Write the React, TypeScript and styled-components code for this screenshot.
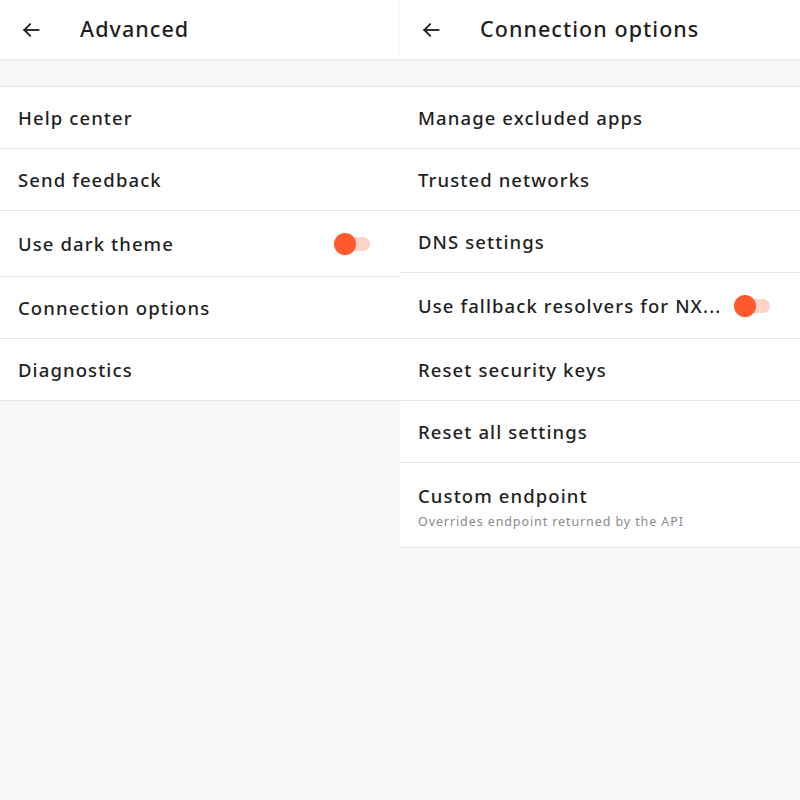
import React from 'react';
import styled, {createGlobalStyle} from "styled-components";

const GlobalStyle = createGlobalStyle`
  html, body {
    margin: 0;
    padding: 0;
    background: #f7f7f7;
  }
  body {
    font-family: "Noto Sans", "Open Sans", sans-serif;
    color: #1f1f1f;
  }
`;

const Page = styled.div`
  display: grid;
  grid-template-columns: 400px 400px;
  width: 800px;
  height: 800px;
  background: #f7f7f7;
`;

const Screen = styled.div`
  display: flex;
  flex-direction: column;
`;

const Header = styled.div`
  height: 59px;
  display: flex;
  align-items: center;
  background: #fff;
  box-shadow: 0 1px 3px rgba(0, 0, 0, 0.08);
  position: relative;
  z-index: 1;
`;

const BackButton = styled.div`
  width: 80px;
  padding-left: 21px;
  box-sizing: border-box;
  display: flex;
  align-items: center;
`;

const Title = styled.div`
  font-size: 21.5px;
  font-weight: 500;
  letter-spacing: 1.05px;
  margin-top: -2px;
`;

const List = styled.div`
  margin-top: 27px;
  background: #fff;
  border-top: 1px solid #e6e6e6;
`;

const Row = styled.div<{ $tall?: boolean }>`
  height: ${p => (p.$tall ? 65 : 61)}px;
  display: flex;
  align-items: center;
  justify-content: space-between;
  padding: 0 30px 0 18px;
  border-bottom: 1px solid #e6e6e6;
`;

const TextBlock = styled.div`
  display: flex;
  flex-direction: column;
`;

const Label = styled.div`
  font-size: 18.5px;
  font-weight: 500;
  letter-spacing: 1.1px;
  white-space: nowrap;
`;

const SubLabel = styled.div`
  font-size: 12.5px;
  color: #8a8a8a;
  margin-top: 5px;
  letter-spacing: 0.9px;
`;

const DetailRow = styled(Row)`
  height: 85px;
  align-items: flex-start;
  padding-top: 20px;
  box-sizing: border-box;
`;

const Track = styled.div`
  position: relative;
  width: 36px;
  height: 14px;
  flex-shrink: 0;
`;

const TrackBar = styled.div`
  position: absolute;
  left: 10px;
  right: 0;
  top: 0;
  bottom: 0;
  border-radius: 7px;
  background: #fdd3c8;
`;

const Thumb = styled.div`
  position: absolute;
  left: 0;
  top: -4px;
  width: 22px;
  height: 22px;
  border-radius: 50%;
  background: #ff5a2c;
  box-shadow: 0 1px 2px rgba(0, 0, 0, 0.1);
`;

const Toggle = () => (
  <Track>
    <TrackBar/>
    <Thumb/>
  </Track>
);

const BackArrow = () => (
  <svg width="20" height="20" viewBox="0 0 24 24" fill="none" stroke="#1f1f1f" strokeWidth="2.2" strokeLinecap="square">
    <path d="M21 12H4"/>
    <path d="M11 5l-7 7 7 7" strokeLinecap="round" strokeLinejoin="miter"/>
  </svg>
);

type Item = { label: string; toggle?: boolean; sub?: string };

const leftItems: Item[] = [
  {label: 'Help center'},
  {label: 'Send feedback'},
  {label: 'Use dark theme', toggle: true},
  {label: 'Connection options'},
  {label: 'Diagnostics'},
];

const rightItems: Item[] = [
  {label: 'Manage excluded apps'},
  {label: 'Trusted networks'},
  {label: 'DNS settings'},
  {label: 'Use fallback resolvers for NX...', toggle: true},
  {label: 'Reset security keys'},
  {label: 'Reset all settings'},
  {label: 'Custom endpoint', sub: 'Overrides endpoint returned by the API'},
];

const SettingsScreen = ({title, items}: { title: string; items: Item[] }) => (
  <Screen>
    <Header>
      <BackButton><BackArrow/></BackButton>
      <Title>{title}</Title>
    </Header>
    <List>
      {items.map(item => {
        if (item.sub) {
          return (
            <DetailRow key={item.label}>
              <TextBlock>
                <Label>{item.label}</Label>
                <SubLabel>{item.sub}</SubLabel>
              </TextBlock>
            </DetailRow>
          );
        }
        return (
          <Row key={item.label} $tall={item.toggle}>
            <Label>{item.label}</Label>
            {item.toggle && <Toggle/>}
          </Row>
        );
      })}
    </List>
  </Screen>
);

const App = () => (
  <>
    <GlobalStyle/>
    <Page>
      <SettingsScreen title="Advanced" items={leftItems}/>
      <SettingsScreen title="Connection options" items={rightItems}/>
    </Page>
  </>
);

export default App;
